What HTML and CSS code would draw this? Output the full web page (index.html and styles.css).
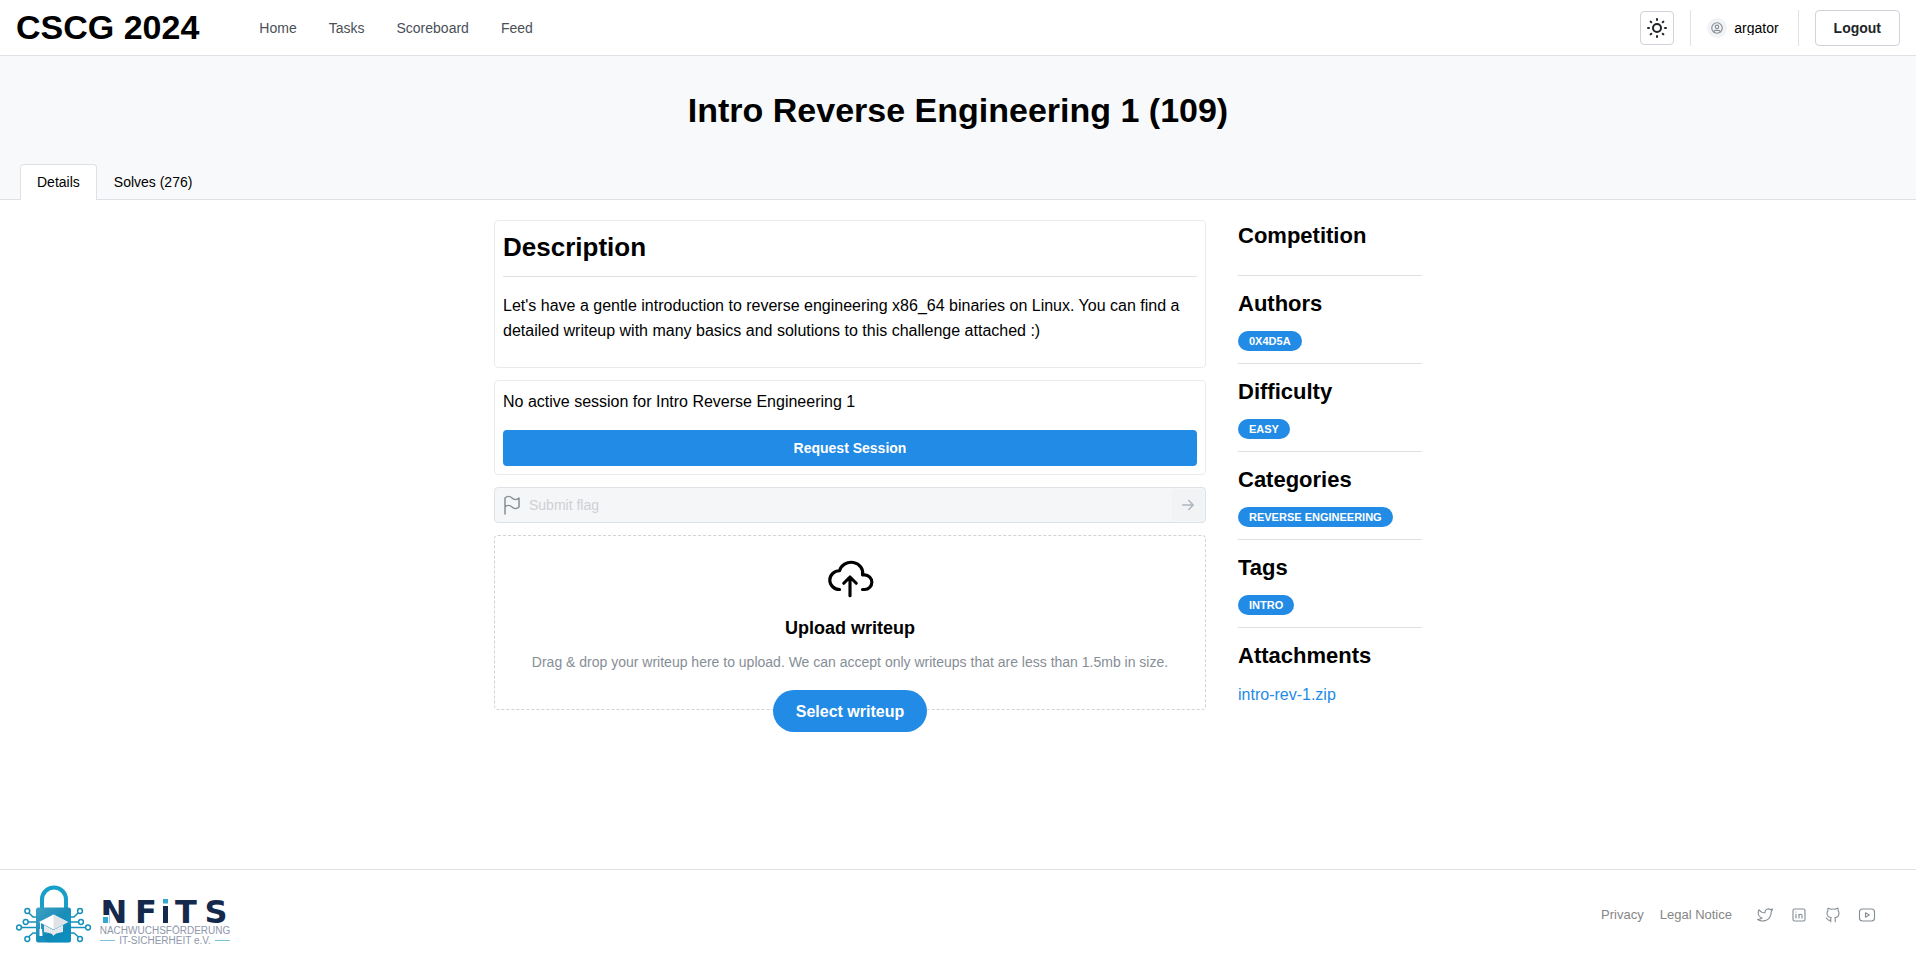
FILE: index.html
```html
<!DOCTYPE html>
<html lang="en">
<head>
<meta charset="utf-8">
<title>Intro Reverse Engineering 1 - CSCG 2024</title>
<link rel="stylesheet" href="styles.css">
</head>
<body>
<header class="topbar">
  <h1 class="brand">CSCG 2024</h1>
  <nav class="nav">
    <a href="#">Home</a>
    <a href="#">Tasks</a>
    <a href="#">Scoreboard</a>
    <a href="#">Feed</a>
  </nav>
  <div class="account">
    <button class="theme" type="button" aria-label="Toggle theme">
      <svg class="icon" width="24" height="24" viewBox="0 0 24 24"><circle cx="12" cy="12" r="4"/><path d="M3 12h1m8-9v1m8 8h1m-9 8v1M5.600 5.600l.7.7m12.100-.7l-.7.7m0 11.400l.7.7m-12.100-.7l-.7.7"/></svg>
    </button>
    <span class="rule"></span>
    <a class="user" href="#">
      <span class="avatar"><svg class="icon" width="14" height="14" viewBox="0 0 24 24"><circle cx="12" cy="12" r="9"/><circle cx="12" cy="10" r="3"/><path d="M6.168 18.849a4 4 0 0 1 3.832-2.849h4a4 4 0 0 1 3.834 2.855"/></svg></span>
      <span class="username">argator</span>
    </a>
    <span class="rule"></span>
    <button class="logout" type="button">Logout</button>
  </div>
</header>

<section class="hero">
  <h1 class="title">Intro Reverse Engineering 1 (109)</h1>
  <div class="tabs" role="tablist">
    <button class="tab active" type="button" role="tab" aria-selected="true">Details</button>
    <button class="tab" type="button" role="tab" aria-selected="false">Solves (276)</button>
  </div>
</section>

<main class="content">
  <div class="primary">
    <section class="card">
      <h2 class="card-title">Description</h2>
      <p class="description">Let's have a gentle introduction to reverse engineering x86_64 binaries on Linux. You can find a detailed writeup with many basics and solutions to this challenge attached :)</p>
    </section>
    <section class="card">
      <p class="session-text">No active session for Intro Reverse Engineering 1</p>
      <button class="request" type="button">Request Session</button>
    </section>
    <form class="flag">
      <svg class="icon" width="24" height="24" viewBox="0 0 24 24"><path d="M5 5a5 5 0 0 1 7 0a5 5 0 0 0 7 0v9a5 5 0 0 1 -7 0a5 5 0 0 0 -7 0v-9zM5 21v-7"/></svg>
      <input type="text" placeholder="Submit flag" aria-label="Submit flag" disabled>
      <button class="send" type="button" aria-label="Submit" disabled>
        <svg class="icon" width="18" height="18" viewBox="0 0 24 24"><path d="M5 12h14M13 18l6-6M13 6l6 6"/></svg>
      </button>
    </form>
    <section class="upload">
      <svg class="icon cloud" width="50" height="50" viewBox="0 0 24 24"><path d="M7 18a4.600 4.400 0 0 1 0-9a5 4.500 0 0 1 11 2h1a3.500 3.500 0 0 1 0 7h-1M9 15l3-3l3 3M12 12v9"/></svg>
      <h3 class="upload-title">Upload writeup</h3>
      <p class="upload-text">Drag &amp; drop your writeup here to upload. We can accept only writeups that are less than 1.5mb in size.</p>
      <button class="select" type="button">Select writeup</button>
    </section>
  </div>
  <aside class="side">
    <section class="fact"><h3>Competition</h3></section>
    <section class="fact"><h3>Authors</h3><span class="badge">0X4D5A</span></section>
    <section class="fact"><h3>Difficulty</h3><span class="badge">EASY</span></section>
    <section class="fact"><h3>Categories</h3><span class="badge">REVERSE ENGINEERING</span></section>
    <section class="fact"><h3>Tags</h3><span class="badge">INTRO</span></section>
    <section class="fact"><h3>Attachments</h3><a class="file" href="#">intro-rev-1.zip</a></section>
  </aside>
</main>

<footer class="footer">
  <a class="sponsor" href="#" aria-label="NFITS">
    <svg width="216" height="62" viewBox="0 0 216 62">
      <defs>
        <linearGradient id="lock" x1="0" y1="0" x2="1" y2="1"><stop offset="0" stop-color="#3fa0c4"/><stop offset=".5" stop-color="#1a8db9"/><stop offset="1" stop-color="#0d9fd0"/></linearGradient>
      </defs>
      <path d="M26 25V15.500a12 12 0 0 1 24 0V25" fill="none" stroke="#179fca" stroke-width="4"/>
      <g fill="none" stroke="#1691bb" stroke-width="1.500">
        <path d="M12.500 28.500L17 33H21M12 38H21M5 43.500H21M12.500 53L17 49H21M62.500 28.500L58 33H54M63 38H54M70 43.500H54M62.500 53L58 49H54"/>
        <g fill="#fff"><circle cx="11.300" cy="27" r="2.400"/><circle cx="9.700" cy="38" r="2.400"/><circle cx="3" cy="43.500" r="2.400"/><circle cx="11.300" cy="55" r="2.400"/><circle cx="64" cy="27" r="2.400"/><circle cx="65" cy="38" r="2.400"/><circle cx="72" cy="43.500" r="2.400"/><circle cx="64" cy="55" r="2.400"/></g>
      </g>
      <rect x="20" y="23.500" width="35" height="35" rx="2.500" fill="url(#lock)"/>
      <path d="M25 52L31.500 58.500H52.500A2.500 2.500 0 0 0 55 56V42L52 39L47 45Z" fill="#087da9" opacity=".4"/>
      <path d="M28 41v7q9 1 9.500 4q1-3 9.500-4v-7l-9.500 5z" fill="#e6e9ec"/>
      <path d="M23 38L37.500 30.500L52 38L37.500 45.500Z" fill="#fff"/>
      <path d="M37.500 30.500L52 38L37.500 45.500Z" fill="#dfe3e6"/>
      <path d="M24.500 38v8" stroke="#fff" fill="none"/>
      <path d="M23.500 45h2.500l.5 7h-3z" fill="#fff"/>
      <g class="wordmark" text-anchor="middle">
        <text x="98" y="39">N</text>
        <text x="130" y="39">F</text>
        <text x="170" y="39">T</text>
        <text x="200" y="39">S</text>
      </g>
      <path d="M147 22h5v17h-5z" fill="#14294b"/>
      <path d="M85 31h8v9h-8z" fill="#fff"/>
      <path d="M147 15h5v4.500h-5zM87 33h5v6h-5z" fill="#35a8cf"/>
      <g class="wordmark-sub" text-anchor="middle">
        <text x="149" y="50">NACHWUCHSFÖRDERUNG</text>
        <text x="149" y="60">IT-SICHERHEIT e.V.</text>
      </g>
      <path d="M84 56.500h15M199 56.500h15" stroke="#7cc3dc" fill="none"/>
    </svg>
  </a>
  <nav class="legal">
    <a href="#">Privacy</a>
    <a href="#">Legal Notice</a>
  </nav>
  <nav class="social">
    <a href="#" aria-label="Twitter"><svg class="icon" width="18" height="18" viewBox="0 0 24 24"><path d="M22 4.010c-1 .49-1.980.689-3 .99c-1.121-1.265-2.783-1.335-4.380-.737s-2.643 2.060-2.620 3.737v1c-3.245.083-6.135-1.395-8-4c0 0-4.182 7.433 4 11c-1.872 1.247-3.739 2.088-6 2c3.308 1.803 6.913 2.423 10.034 1.517c3.580-1.040 6.522-3.723 7.651-7.742a13.840 13.840 0 0 0 .497-3.753c0-.249 1.510-2.772 1.818-4.013z"/></svg></a>
    <a href="#" aria-label="LinkedIn"><svg class="icon" width="18" height="18" viewBox="0 0 24 24"><rect x="4" y="4" width="16" height="16" rx="2"/><path d="M8 11v5M8 8v.01M12 16v-5M16 16v-3a2 2 0 0 0-4 0"/></svg></a>
    <a href="#" aria-label="GitHub"><svg class="icon" width="18" height="18" viewBox="0 0 24 24"><path d="M9 19c-4.300 1.400-4.300-2.500-6-3m12 5v-3.500c0-1 .1-1.400-.5-2c2.800-.3 5.500-1.400 5.500-6a4.600 4.600 0 0 0-1.300-3.200a4.200 4.200 0 0 0-.1-3.200s-1.100-.3-3.500 1.300a12.300 12.300 0 0 0-6.200 0c-2.400-1.600-3.500-1.300-3.500-1.300a4.200 4.200 0 0 0-.1 3.200a4.600 4.600 0 0 0-1.300 3.200c0 4.600 2.700 5.700 5.500 6c-.6.6-.6 1.200-.5 2v3.500"/></svg></a>
    <a href="#" aria-label="YouTube"><svg class="icon" width="18" height="18" viewBox="0 0 24 24"><rect x="2" y="4" width="20" height="16" rx="4"/><path d="M10 9l5 3l-5 3z"/></svg></a>
  </nav>
</footer>
</body>
</html>
```
FILE: styles.css
```css
* { box-sizing: border-box; }

body {
  margin: 0;
  min-height: 100vh;
  display: flex;
  flex-direction: column;
  font-family: "Liberation Sans", Arial, sans-serif;
  font-size: 16px;
  line-height: 25px;
  color: #000;
  background: #fff;
}

h1, h2, h3, p { margin: 0; }
a { color: inherit; text-decoration: none; }
button, input { font: inherit; color: inherit; }
button { cursor: pointer; }

.icon {
  display: block;
  flex: none;
  fill: none;
  stroke: currentColor;
  stroke-width: 2;
  stroke-linecap: round;
  stroke-linejoin: round;
}

.topbar {
  display: flex;
  align-items: center;
  height: 56px;
  padding: 0 16px;
  border-bottom: 1px solid #dee2e6;
}
.title { font-size: 34px; line-height: 44px; }
.brand { font-size: 34px; line-height: 44px; padding-bottom: 2px; }
.nav {
  display: flex;
  gap: 32px;
  margin-left: 60px;
  font-size: 14px;
  line-height: 24px;
  color: #495057;
}
.account {
  display: flex;
  align-items: center;
  gap: 16px;
  margin-left: auto;
  font-size: 14px;
}
.theme {
  display: grid;
  place-items: center;
  width: 34px;
  height: 34px;
  padding: 0;
  color: #212529;
  background: #fff;
  border: 1px solid #ced4da;
  border-radius: 4px;
}
.theme .icon { stroke-width: 2; }
.rule { width: 1px; height: 36px; background: #dee2e6; }
.user { display: flex; align-items: center; gap: 7px; padding-right: 3px; }
.avatar {
  display: grid;
  place-items: center;
  width: 20px;
  height: 20px;
  border-radius: 50%;
  background: #f1f3f5;
  color: #868e96;
}
.username { line-height: 14px; overflow: hidden; }
.logout {
  height: 36px;
  padding: 0 18px;
  font-weight: 700;
  line-height: 24px;
  color: #212529;
  background: #fff;
  border: 1px solid #ced4da;
  border-radius: 4px;
}

.hero { background: #f8f9fa; padding-top: 32px; }
.title { text-align: center; }
.tabs {
  display: flex;
  margin-top: 32px;
  padding: 0 20px;
  border-bottom: 1px solid #dee2e6;
}
.tab {
  height: 36px;
  margin-bottom: -1px;
  padding: 0 16px;
  font-size: 14px;
  background: none;
  border: 1px solid transparent;
  border-bottom: 0;
  border-radius: 4px 4px 0 0;
}
.tab.active { background: #fff; border-color: #dee2e6; }

.content {
  display: grid;
  grid-template-columns: minmax(0, 1fr) 184px;
  gap: 32px;
  width: 100%;
  max-width: 960px;
  margin: 0 auto;
  padding: 20px 16px;
}
.primary { display: flex; flex-direction: column; gap: 12px; }
.card { padding: 8px; border: 1px solid #e9ecef; border-radius: 4px; }
.card-title {
  font-size: 26px;
  line-height: 36px;
  padding-bottom: 11px;
  border-bottom: 1px solid #dee2e6;
}
.description { padding: 16px 0; }
.session-text { margin-bottom: 16px; }
.request {
  display: block;
  width: 100%;
  height: 36px;
  font-size: 14px;
  font-weight: 700;
  color: #fff;
  background: #228be6;
  border: 0;
  border-radius: 4px;
}
.flag {
  display: flex;
  align-items: center;
  height: 36px;
  padding: 0 1px 0 5px;
  color: #868e96;
  background: #f5f6f8;
  border: 1px solid #dee2e6;
  border-radius: 4px;
}
.flag .icon { stroke-width: 1.5; }
.flag input {
  flex: 1;
  min-width: 0;
  padding: 0 5px;
  font-size: 14px;
  border: 0;
  background: none;
}
.flag input::placeholder { color: #ced0d4; opacity: 1; }
.send {
  display: grid;
  place-items: center;
  width: 32px;
  height: 32px;
  padding: 0;
  color: #adb5bd;
  background: #f1f3f5;
  border: 0;
  border-radius: 4px;
}
.flag .send .icon { stroke-width: 2; }
.upload {
  display: flex;
  flex-direction: column;
  align-items: center;
  height: 175px;
  padding-top: 16px;
  border: 1px dashed #ced4da;
  border-radius: 4px;
}
.cloud { stroke-width: 1.5; }
.upload-title { margin-top: 12px; font-size: 18px; line-height: 28px; }
.upload-text { margin-top: 9px; font-size: 14px; line-height: 22px; color: #868e96; }
.select {
  flex: none;
  height: 42px;
  margin-top: 17px;
  padding: 0 23px;
  font-weight: 700;
  color: #fff;
  background: #228be6;
  border: 0;
  border-radius: 32px;
}

.fact { padding-bottom: 12px; margin-bottom: 13px; border-bottom: 1px solid #dee2e6; }
.fact:first-child { padding: 1px 0 24px; }
.fact:last-child { border: 0; }
.fact h3 { font-size: 22px; line-height: 30px; }
.badge {
  display: block;
  width: fit-content;
  margin-top: 12px;
  padding: 0 11px;
  font-size: 11px;
  font-weight: 700;
  line-height: 20px;
  color: #fff;
  background: #228be6;
  border-radius: 32px;
}
.file { display: block; margin-top: 11px; color: #228be6; }

.footer {
  display: flex;
  align-items: center;
  min-height: 90px;
  margin-top: auto;
  padding: 0 40px 0 16px;
  border-top: 1px solid #dee2e6;
}
.sponsor svg { display: block; }
.wordmark { font: 700 32px "DejaVu Sans", sans-serif; fill: #14294b; }
.wordmark-sub { font: 10px "Liberation Sans", sans-serif; fill: #8f97aa; }
.legal {
  display: flex;
  gap: 16px;
  margin-left: auto;
  font-size: 13px;
  color: #868686;
}
.social { display: flex; gap: 16px; margin-left: 24px; color: #868e96; }
.social .icon { stroke-width: 1.5; }
```
